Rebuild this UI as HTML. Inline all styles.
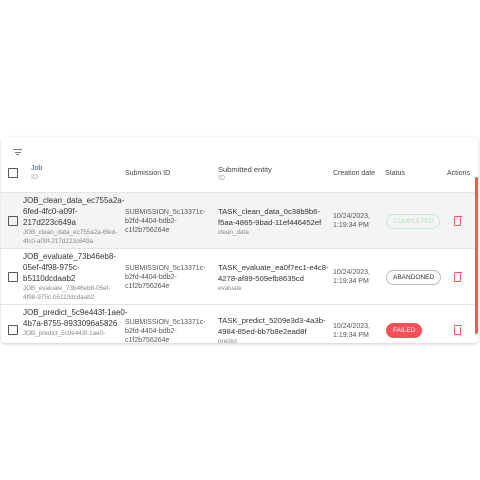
<html><head><style>
body{margin:0;width:480px;height:480px;background:#fff;font-family:"Liberation Sans",sans-serif;position:relative;overflow:hidden}
.card{position:absolute;left:1px;top:137px;width:477px;height:206px;border-radius:4px;box-shadow:0 1px 3px rgba(0,0,0,.2);background:#fff;overflow:hidden}
.a{position:absolute;white-space:nowrap}
.h{font-size:7px;color:#444}
.m{font-size:8px;color:#333;line-height:11px}
.s{font-size:6.3px;color:#888;line-height:9px}
.sub{font-size:7px;color:#555;line-height:9px}
.cb{position:absolute;left:7px;width:8px;height:8px;border:1.5px solid #555;border-radius:1px}
.row{position:absolute;left:0;width:477px;border-top:1px solid #e4e4e4}
.chip{position:absolute;font-size:6.5px;border-radius:9px;padding:3px 6px;line-height:7px}
.del{position:absolute;left:453px;width:5px;height:7px;border:1.3px solid #f55;border-top:none;border-radius:0 0 1px 1px}
.del:before{content:"";position:absolute;left:-1.5px;top:-2.5px;width:8px;height:1.4px;background:#f55}
</style></head><body>
<div class="card">
<div class="a" style="left:12px;top:12px;width:9px;height:1px;background:#777"></div>
<div class="a" style="left:13.5px;top:14.5px;width:6px;height:1px;background:#777"></div>
<div class="a" style="left:15px;top:17px;width:3px;height:1px;background:#777"></div>
<div class="cb" style="top:31px"></div>
<div class="a h" style="left:30px;top:28px;color:#3b4c86">Job</div>
<div class="a h" style="left:30px;top:37px;color:#aaa">ID</div>
<div class="a h" style="left:124px;top:33px">Submission ID</div>
<div class="a h" style="left:217px;top:28px;font-size:7.5px">Submitted entity</div>
<div class="a h" style="left:217px;top:38px;color:#aaa">ID</div>
<div class="a h" style="left:332px;top:33px">Creation date</div>
<div class="a h" style="left:384px;top:33px">Status</div>
<div class="a h" style="left:446px;top:33px">Actions</div>

<div class="row" style="top:55px;height:56px;background:#f4f4f4"></div>
<div class="cb" style="top:79px"></div>
<div class="a m" style="left:22px;top:58px">JOB_clean_data_ec755a2a-<br>6fed-4fc0-a09f-<br>217d223c649a</div>
<div class="a s" style="left:22px;top:91px">JOB_clean_data_ec755a2a-6fed-<br>4fc0-a09f-217d223c649a</div>
<div class="a sub" style="left:124px;top:71px">SUBMISSION_5c13371c-<br>b2fd-4404-bdb2-<br>c1f2b756264e</div>
<div class="a m" style="left:217px;top:69px;font-size:7.7px">TASK_clean_data_0c38b9b6-<br>f5aa-4865-9bad-11ef446452ef</div>
<div class="a s" style="left:217px;top:91px">clean_data</div>
<div class="a sub" style="left:332px;top:75px">10/24/2023,<br>1:19:34 PM</div>
<div class="chip" style="left:385px;top:77px;border:1px solid #c5ecd3;color:#b5e2c4">COMPLETED</div>
<div class="del" style="top:81px"></div>

<div class="row" style="top:111px;height:56px"></div>
<div class="cb" style="top:135px"></div>
<div class="a m" style="left:22px;top:114px">JOB_evaluate_73b46eb8-<br>05ef-4f98-975c-<br>b5110dcdaab2</div>
<div class="a s" style="left:22px;top:147px">JOB_evaluate_73b46eb8-05ef-<br>4f98-975c-b5110dcdaab2</div>
<div class="a sub" style="left:124px;top:127px">SUBMISSION_5c13371c-<br>b2fd-4404-bdb2-<br>c1f2b756264e</div>
<div class="a m" style="left:217px;top:125px;font-size:7.7px">TASK_evaluate_ea0f7ec1-e4c8-<br>4278-af89-509efb8635cd</div>
<div class="a s" style="left:217px;top:147px">evaluate</div>
<div class="a sub" style="left:332px;top:131px">10/24/2023,<br>1:19:34 PM</div>
<div class="chip" style="left:385px;top:133px;border:1px solid #bbb;color:#333">ABANDONED</div>
<div class="del" style="top:137px"></div>

<div class="row" style="top:167px;height:40px"></div>
<div class="cb" style="top:188px"></div>
<div class="a m" style="left:22px;top:170px">JOB_predict_5c9e443f-1ae0-<br>4b7a-8755-8933096a5826</div>
<div class="a s" style="left:22px;top:192px">JOB_predict_5c9e443f-1ae0-</div>
<div class="a sub" style="left:124px;top:181px">SUBMISSION_5c13371c-<br>b2fd-4404-bdb2-<br>c1f2b756264e</div>
<div class="a m" style="left:217px;top:178px;font-size:7.7px">TASK_predict_5209e3d3-4a3b-<br>4984-85ed-bb7b8e2ead8f</div>
<div class="a s" style="left:217px;top:200px">predict</div>
<div class="a sub" style="left:332px;top:185px">10/24/2023,<br>1:19:34 PM</div>
<div class="chip" style="left:385px;top:186px;background:#f55058;color:#fff;border:1px solid #f55058">FAILED</div>
<div class="del" style="top:190px"></div>

<div class="a" style="left:474px;top:40px;width:3px;height:157px;background:#f55;border-radius:2px"></div>
</div>
</body></html>
